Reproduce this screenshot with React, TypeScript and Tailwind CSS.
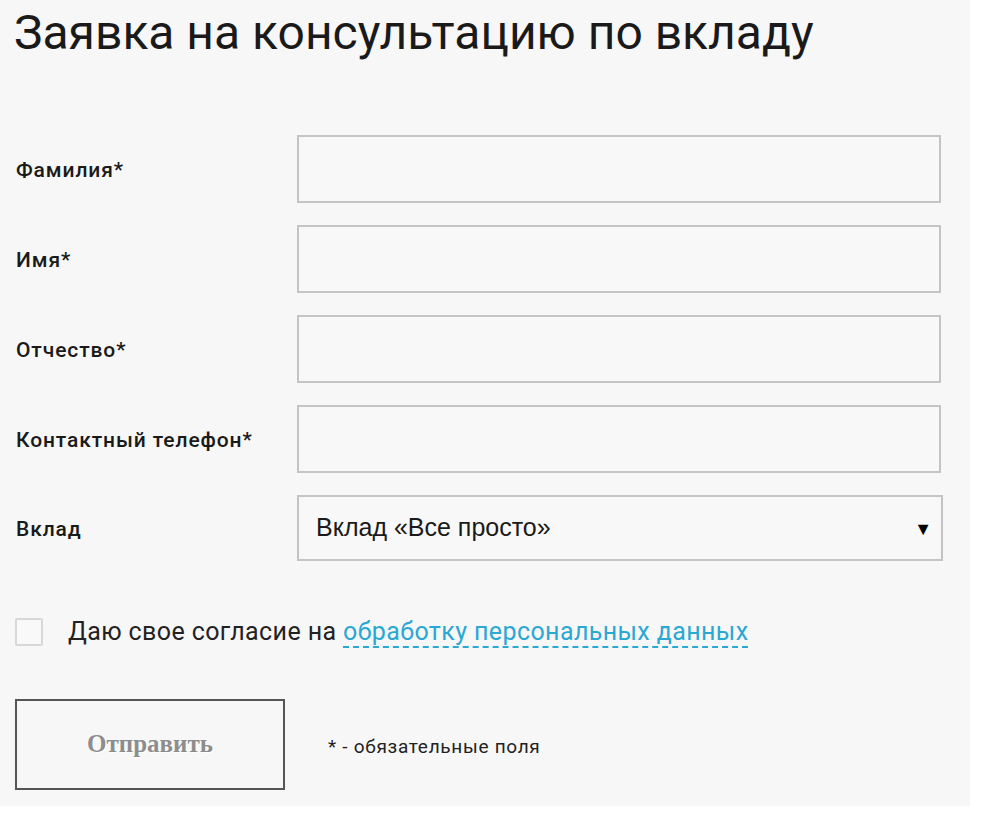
import { useState } from 'react';

const fields = ['Фамилия*', 'Имя*', 'Отчество*', 'Контактный телефон*'];

export default function App() {
  const [agree, setAgree] = useState(false);

  return (
    <div className="w-[984px] h-[814px] bg-white">
      <div
        className="w-[970px] h-[806px] bg-[#f7f7f7] text-[#1a1a1a]"
        style={{ fontFamily: 'Roboto, "Noto Sans", sans-serif' }}
      >
        <h1 className="pl-[14px] pt-[3px] text-[48px] leading-[60px] font-normal">
          Заявка на консультацию по вкладу
        </h1>

        <form className="mt-[72px] flex flex-col gap-[22px]" onSubmit={(e) => e.preventDefault()}>
          {fields.map((f) => (
            <div key={f} className="flex items-center">
              <label className="w-[297px] pl-[16px] pt-[4px] text-[21px] tracking-[0.9px] font-medium">{f}</label>
              <input className="w-[644px] h-[68px] border-2 border-[#c4c4c4] bg-[#f8f8f8] outline-none px-4 text-[20px]" />
            </div>
          ))}

          <div className="flex items-center">
            <label className="w-[297px] pl-[16px] pt-[4px] text-[21px] tracking-[0.9px] font-medium">Вклад</label>
            <div className="w-[646px] h-[66px] border-2 border-[#c4c4c4] bg-[#f8f8f8] flex items-center justify-between pl-[17px] pr-[9px]">
              <span className="text-[25px]" style={{ fontFamily: '"Liberation Sans", Arial, sans-serif' }}>
                Вклад «Все просто»
              </span>
              <span className="text-[18px] text-black">▼</span>
            </div>
          </div>

          <div className="mt-[30px] flex items-center">
            <button
              type="button"
              onClick={() => setAgree(!agree)}
              className="ml-[15px] w-[28px] h-[28px] border-2 border-[#d8d8d8] rounded-[2px] bg-[#f9f9f9] flex items-center justify-center text-[#29a8d4]"
            >
              {agree ? '✓' : ''}
            </button>
            <span className="ml-[25px] text-[25px] tracking-[0.4px] text-[#222]">
              Даю свое согласие на{' '}
              <a className="text-[#2aa7d3] border-b-2 border-dashed border-[#2aa7d3] leading-[1]">
                обработку персональных данных
              </a>
            </span>
          </div>

          <div className="mt-[26px] flex items-center">
            <button
              type="submit"
              className="ml-[15px] w-[270px] h-[91px] border-2 border-[#555] bg-[#f7f7f7] text-[25px] font-bold text-[#8d8d8d]"
              style={{ fontFamily: '"Liberation Serif", "Times New Roman", serif', textShadow: '1px 1px 0 #fff' }}
            >
              Отправить
            </button>
            <span className="ml-[43px] mt-[6px] text-[19px] tracking-[0.7px] text-[#222]">* - обязательные поля</span>
          </div>
        </form>
      </div>
    </div>
  );
}
